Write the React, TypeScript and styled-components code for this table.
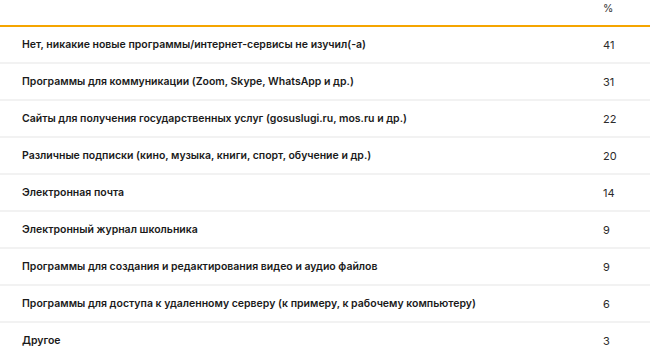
import styled, { createGlobalStyle } from 'styled-components';

const GlobalStyle = createGlobalStyle`
  html, body {
    margin: 0;
    padding: 0;
    background: #ffffff;
  }
  body {
    font-family: Inter, "Noto Sans", sans-serif;
    color: #1a1a1a;
  }
`;

const Table = styled.div`
  width: 650px;
  display: flex;
  flex-direction: column;
`;

const HeadRow = styled.div`
  display: grid;
  grid-template-columns: 1fr 47px;
  height: 25px;
  border-bottom: 2px solid #f5a500;
  box-sizing: content-box;
`;

const HeadCell = styled.div`
  font-size: 10.5px;
  color: #333333;
  padding-top: 2px;
`;

const Row = styled.div<{ $last?: boolean }>`
  display: grid;
  grid-template-columns: 1fr 47px;
  align-items: center;
  height: 35px;
  border-bottom: ${(p) => (p.$last ? 'none' : '2px solid #f2f2f2')};
`;

const Label = styled.div`
  padding-left: 22px;
  font-size: 10.5px;
  font-weight: 600;
  color: #1a1a1a;
`;

const Value = styled.div`
  font-size: 11px;
  color: #2b2b2b;
`;

const rows: [string, number][] = [
  ['Нет, никакие новые программы/интернет-сервисы не изучил(-а)', 41],
  ['Программы для коммуникации (Zoom, Skype, WhatsApp и др.)', 31],
  ['Сайты для получения государственных услуг (gosuslugi.ru, mos.ru и др.)', 22],
  ['Различные подписки (кино, музыка, книги, спорт, обучение и др.)', 20],
  ['Электронная почта', 14],
  ['Электронный журнал школьника', 9],
  ['Программы для создания и редактирования видео и аудио файлов', 9],
  ['Программы для доступа к удаленному серверу (к примеру, к рабочему компьютеру)', 6],
  ['Другое', 3],
];

export default function App() {
  return (
    <>
      <GlobalStyle />
      <Table>
        <HeadRow>
          <div />
          <HeadCell>%</HeadCell>
        </HeadRow>
        {rows.map(([label, value], i) => (
          <Row key={label} $last={i === rows.length - 1}>
            <Label>{label}</Label>
            <Value>{value}</Value>
          </Row>
        ))}
      </Table>
    </>
  );
}
